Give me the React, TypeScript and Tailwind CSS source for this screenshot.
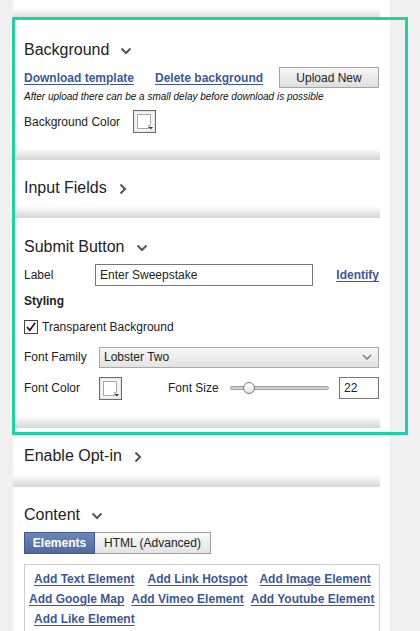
import React from "react";

const font = { fontFamily: '"Liberation Sans", Arial, sans-serif' };

function ChevronDown() {
  return (
    <svg width="12" height="8" viewBox="0 0 12 8" className="ml-[11px] mt-[2px]">
      <path d="M1.5 1.5 L6 6 L10.5 1.5" fill="none" stroke="#555" strokeWidth="2" />
    </svg>
  );
}
function ChevronRight() {
  return (
    <svg width="8" height="12" viewBox="0 0 8 12" className="ml-[12px] mt-[1px]">
      <path d="M1.5 1.5 L6 6 L1.5 10.5" fill="none" stroke="#555" strokeWidth="2" />
    </svg>
  );
}

function Band() {
  return <div className="mt-auto h-[12px] w-full bg-gradient-to-b from-white to-[#d6d6d6]" />;
}

function Heading({ text, open }: { text: string; open: boolean }) {
  return (
    <div className="flex h-[20px] items-center text-[16px] text-[#222]">
      <span>{text}</span>
      {open ? <ChevronDown /> : <ChevronRight />}
    </div>
  );
}

function Swatch() {
  return (
    <svg width="23" height="23" viewBox="0 0 23 23">
      <rect x="0.5" y="0.5" width="22" height="22" fill="#f4f4f4" stroke="#6b6b6b" />
      <rect x="1.5" y="1.5" width="20" height="20" fill="none" stroke="#e6e6e6" />
      <path d="M4.5 4.5 H17.5 V15.5 H15.5 V18.5 H4.5 Z" fill="#fff" stroke="#a8a8a8" />
      <path d="M15.5 17 L20 17 L17.75 19.5 Z" fill="#333" />
    </svg>
  );
}

function Link({ children, className = "" }: { children: React.ReactNode; className?: string }) {
  return (
    <a className={"text-[12px] font-bold text-[#3b5998] underline underline-offset-[2px] whitespace-nowrap " + className}>
      {children}
    </a>
  );
}

export default function App() {
  return (
    <div className="relative h-[631px] w-[420px] overflow-hidden bg-[#f0f0f0] text-[#222]" style={font}>
      <div className="ml-[13px] h-full w-[377px] bg-white">
        {/* previous section tail */}
        <div className="flex h-[20px] w-[367px] flex-col">
          <Band />
        </div>

        {/* Background */}
        <div className="flex h-[140px] w-[367px] flex-col pl-[11px] pt-[20px]">
          <Heading text="Background" open />
          <div className="mt-[7px] flex h-[21px] items-center pr-[1px]">
            <Link>Download template</Link>
            <Link className="ml-[21px]">Delete background</Link>
            <button className="ml-auto h-[21px] w-[100px] border border-[#a3a3a3] bg-gradient-to-b from-[#f7f7f7] to-[#dedede] text-[12px] text-[#222]">
              Upload New
            </button>
          </div>
          <div className="mt-[3px] h-[12px] text-[10px] italic leading-[12px] text-[#111]">
            After upload there can be a small delay before download is possible
          </div>
          <div className="mt-[7px] flex h-[23px] items-center">
            <span className="w-[109px] text-[12px]">Background Color</span>
            <Swatch />
          </div>
          <div className="-ml-[11px] mt-auto">
            <Band />
          </div>
        </div>

        {/* Input Fields */}
        <div className="flex h-[58px] w-[367px] flex-col pl-[11px] pt-[18px]">
          <Heading text="Input Fields" open={false} />
          <div className="-ml-[11px] mt-auto">
            <Band />
          </div>
        </div>

        {/* Submit Button */}
        <div className="flex h-[210px] w-[367px] flex-col pl-[11px] pt-[19px]">
          <Heading text="Submit Button" open />
          <div className="mt-[7px] flex h-[22px] items-center pr-[1px]">
            <span className="w-[71px] text-[12px]">Label</span>
            <div className="flex h-[22px] w-[218px] items-center border border-[#777] bg-white pl-[4px] text-[12px]">
              Enter Sweepstake
            </div>
            <Link className="ml-auto">Identify</Link>
          </div>
          <div className="mt-[8px] h-[14px] text-[12px] font-bold leading-[14px]">Styling</div>
          <div className="mt-[12px] flex h-[14px] items-center">
            <svg width="14" height="14" viewBox="0 0 14 14">
              <rect x="0.5" y="0.5" width="13" height="13" fill="#fff" stroke="#444" />
              <path d="M3 7 L5.8 10.2 L11.2 2.8" fill="none" stroke="#222" strokeWidth="1.8" />
            </svg>
            <span className="ml-[4px] text-[12px]">Transparent Background</span>
          </div>
          <div className="mt-[13px] flex h-[20px] items-center pr-[1px]">
            <span className="w-[75px] text-[12px]">Font Family</span>
            <div className="flex h-[21px] flex-1 items-center justify-between border border-[#a9a9a9] bg-gradient-to-b from-[#f6f6f6] to-[#e3e3e3] pl-[4px] pr-[6px] text-[12px]">
              <span>Lobster Two</span>
              <svg width="10" height="6" viewBox="0 0 10 6">
                <path d="M1 1 L5 5 L9 1" fill="none" stroke="#777" strokeWidth="1.4" />
              </svg>
            </div>
          </div>
          <div className="mt-[10px] flex h-[22px] items-center pr-[1px]">
            <span className="w-[75px] text-[12px]">Font Color</span>
            <Swatch />
            <span className="ml-[46px] text-[12px]">Font Size</span>
            <div className="relative ml-[11px] h-[14px] w-[99px]">
              <div className="absolute left-0 right-0 top-[5px] h-[4px] rounded-full border border-[#a0a0a0] bg-gradient-to-b from-[#bbb] to-[#e8e8e8]" />
              <div className="absolute left-[13px] top-[1px] h-[12px] w-[12px] rounded-full border border-[#777] bg-gradient-to-b from-white to-[#e4e4e4]" />
            </div>
            <div className="ml-auto flex h-[22px] w-[40px] items-center border border-[#777] bg-white pl-[4px] text-[12px]">
              22
            </div>
          </div>
          <div className="-ml-[11px] mt-auto">
            <Band />
          </div>
        </div>

        {/* Enable Opt-in */}
        <div className="flex h-[59px] w-[367px] flex-col pl-[11px] pt-[18px]">
          <Heading text="Enable Opt-in" open={false} />
          <div className="-ml-[11px] mt-auto">
            <Band />
          </div>
        </div>

        {/* Content */}
        <div className="flex w-[367px] flex-col pl-[11px] pt-[18px]">
          <Heading text="Content" open />
          <div className="mt-[7px] flex h-[22px]">
            <div className="flex w-[71px] items-center justify-center border border-[#3f5a93] bg-gradient-to-b from-[#6d86b6] to-[#4f6a9e] text-[12px] font-bold text-white">
              Elements
            </div>
            <div className="flex w-[116px] items-center justify-center border border-l-0 border-[#a0a0a0] bg-gradient-to-b from-[#fafafa] to-[#e3e3e3] text-[12px] text-[#222]">
              HTML (Advanced)
            </div>
          </div>
          <div className="mt-[10px] h-[80px] w-[356px] border border-[#cfcfcf] pt-[4px]">
            <div className="flex h-[20px] items-center pl-[9px]">
              <Link>Add Text Element</Link>
              <Link className="ml-[13px]">Add Link Hotspot</Link>
              <Link className="ml-[12px]">Add Image Element</Link>
            </div>
            <div className="flex h-[20px] items-center pl-[4px]">
              <Link>Add Google Map</Link>
              <Link className="ml-[7px]">Add Vimeo Element</Link>
              <Link className="ml-[7px]">Add Youtube Element</Link>
            </div>
            <div className="flex h-[20px] items-center pl-[9px]">
              <Link>Add Like Element</Link>
            </div>
          </div>
        </div>
      </div>

      {/* highlight outline */}
      <div className="pointer-events-none absolute left-[12px] top-[17px] h-[418px] w-[396px] border-[3px] border-[#1ed3a2]" />
    </div>
  );
}
